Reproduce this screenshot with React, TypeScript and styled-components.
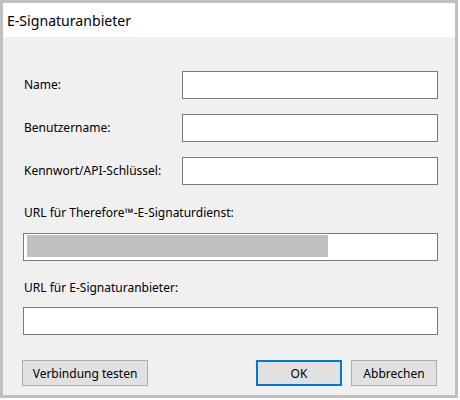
import React from "react";
import styled, { createGlobalStyle } from "styled-components";

const GlobalStyle = createGlobalStyle`
  html, body { margin: 0; padding: 0; background: #ffffff; }
  * { box-sizing: border-box; }
`;

const FONT = `"Segoe UI", "Noto Sans", Lato, sans-serif`;

const Dialog = styled.div`
  width: 458px;
  height: 398px;
  border: 3px solid #c0c0c0;
  display: flex;
  flex-direction: column;
  font-family: ${FONT};
  color: #000;
`;

const TitleBar = styled.div`
  height: 34px;
  flex: none;
  background: #ffffff;
  display: flex;
  align-items: center;
  padding-left: 4px;
  font-size: 14.1px;
`;

const Body = styled.div`
  flex: 1;
  background: #f0f0f0;
  padding: 34px 17px 0 20px;
  display: flex;
  flex-direction: column;
`;

const FieldGrid = styled.div`
  display: grid;
  grid-template-columns: 1fr 256px;
  row-gap: 15px;
  align-items: center;
`;

const Label = styled.label<{ $top?: number }>`
  display: block;
  font-size: 12px;
  line-height: 16px;
  padding-left: 1px;
  margin-top: ${(p) => p.$top ?? 0}px;
`;

const TextBox = styled.div<{ $top?: number }>`
  height: 28px;
  border: 1px solid #7a7a7a;
  background: #ffffff;
  margin-top: ${(p) => p.$top ?? 0}px;
  padding: 1px 0 0 3px;
  display: flex;
  align-items: flex-start;
`;

const Redacted = styled.div<{ $w: number }>`
  width: ${(p) => p.$w}px;
  height: 22px;
  background: #c0c0c0;
`;

const ButtonRow = styled.div`
  margin-top: 25px;
  margin-left: -1px;
  display: flex;
  gap: 9px;
  padding-right: 1px;
`;

const Spacer = styled.div`
  flex: 1;
`;

const Button = styled.button<{ $w: number; $default?: boolean }>`
  width: ${(p) => p.$w}px;
  height: 26px;
  margin: 0;
  padding: 0;
  background: #e1e1e1;
  border: ${(p) => (p.$default ? "2px solid #0078d7" : "1px solid #adadad")};
  font-family: ${FONT};
  font-size: 12px;
  color: #000;
  display: flex;
  align-items: center;
  justify-content: center;
`;

export default function App() {
  return (
    <>
      <GlobalStyle />
      <Dialog>
        <TitleBar>E-Signaturanbieter</TitleBar>
        <Body>
          <FieldGrid>
            <Label>Name:</Label>
            <TextBox />
            <Label>Benutzername:</Label>
            <TextBox />
            <Label>Kennwort/API-Schlüssel:</Label>
            <TextBox />
          </FieldGrid>
          <Label $top={20}>URL für Therefore™-E-Signaturdienst:</Label>
          <TextBox $top={12}>
            <Redacted $w={301} />
          </TextBox>
          <Label $top={19}>URL für E-Signaturanbieter:</Label>
          <TextBox $top={11} />
          <ButtonRow>
            <Button $w={126}>Verbindung testen</Button>
            <Spacer />
            <Button $w={86} $default>
              OK
            </Button>
            <Button $w={86}>Abbrechen</Button>
          </ButtonRow>
        </Body>
      </Dialog>
    </>
  );
}
